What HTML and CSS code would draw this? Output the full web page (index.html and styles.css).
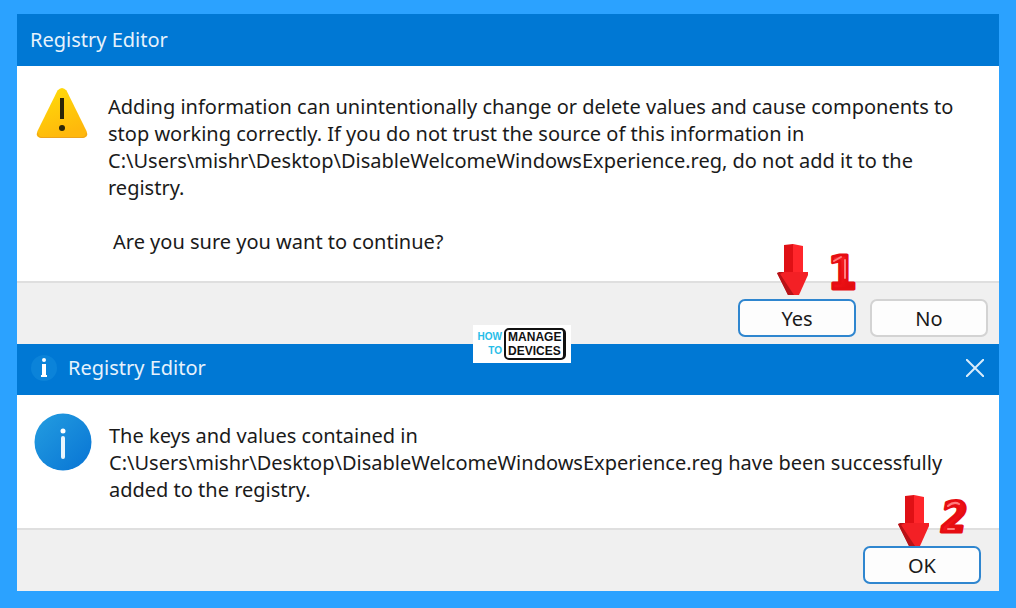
FILE: index.html
```html
<!DOCTYPE html>
<html lang="en">
<head>
  <meta charset="UTF-8">
  <title>Registry Editor</title>
  <meta name="viewport" content="width=device-width, initial-scale=1.0">
  <link rel="stylesheet" href="styles.css">
</head>
<body>

  <section class="dialog">
    <header class="title-bar">
      <h2>Registry Editor</h2>
    </header>
    <div class="message message-warning">
      <svg class="icon-warning" viewBox="0 0 52 52" aria-hidden="true">
        <defs>
          <linearGradient id="warn" x1="0" y1="0" x2="0.4" y2="1">
            <stop offset="0" stop-color="#ffde08"/>
            <stop offset="1" stop-color="#ffb80c"/>
          </linearGradient>
        </defs>
        <path d="M21.500 3.500Q26 -1.500 30.500 3.500L50.500 44Q53 50.500 47 51H5Q-1 50.500 1.500 44Z" fill="url(#warn)"/>
        <path d="M1.500 46Q2 50.500 6 50.500H46Q50 50.500 50.500 46" fill="none" stroke="#eda31c"/>
        <path d="M26 11V32" stroke="#2b2508" stroke-width="4"/>
        <circle cx="26" cy="41" r="3" fill="#2b2508"/>
      </svg>
      <div class="text">
        <p>Adding information can unintentionally change or delete values and cause components to stop working correctly. If you do not trust the source of this information in C:\Users\mishr\Desktop\DisableWelcomeWindowsExperience.reg, do not add it to the registry.</p>
        <p class="question">Are you sure you want to continue?</p>
      </div>
    </div>
    <footer class="actions">
      <div class="step">
        <button class="btn btn-default" type="button">Yes</button>
        <svg class="marker" viewBox="0 -6 90 70" aria-hidden="true">
          <defs>
            <linearGradient id="gloss" x1="0" y1="0" x2="1" y2="1">
              <stop offset="0" stop-color="#ff3a3a"/>
              <stop offset="0.5" stop-color="#f01116"/>
              <stop offset="1" stop-color="#d4080c"/>
            </linearGradient>
            <g id="arrow">
              <path d="M7 1L16 0V29H7Z" fill="#df1015"/>
              <path d="M16 0L26 2V29H16Z" fill="#ff262b"/>
              <path d="M0 29L2 28H14L20 51H11Z" fill="#b81217"/>
              <path d="M3 30L7 28H31V31L22 51H15Z" fill="#f32025"/>
              <path d="M0 29L3 30L17 51H11Z" fill="#b81217"/>
            </g>
          </defs>
          <use href="#arrow"/>
          <text class="digit digit-one" x="51" y="45">1</text>
          <path class="shine" d="M57 17L64 13M68 16V34"/>
        </svg>
      </div>
      <button class="btn" type="button">No</button>
    </footer>
  </section>

  <section class="dialog">
    <header class="title-bar title-bar-info">
      <svg class="icon-small" viewBox="0 0 28 28" aria-hidden="true">
        <circle cx="14" cy="14" r="13" fill="#0b83d9"/>
        <circle cx="14" cy="6" r="2" fill="#fff"/>
        <path d="M12 10H16V21H17V23H11V21H12Z" fill="#fff"/>
      </svg>
      <h2>Registry Editor</h2>
      <button class="close" type="button" aria-label="Close">
        <svg viewBox="0 0 18 18" aria-hidden="true">
          <path d="M0 0L18 18M18 0L0 18" stroke="#d9ecfb" stroke-width="2"/>
        </svg>
      </button>
    </header>
    <div class="message message-info">
      <svg class="icon-info" viewBox="0 0 58 58" aria-hidden="true">
        <defs>
          <linearGradient id="info" x1="0" y1="0" x2="1" y2="1">
            <stop offset="0.1" stop-color="#2199df"/>
            <stop offset="1" stop-color="#0874d4"/>
          </linearGradient>
        </defs>
        <circle cx="29" cy="29" r="28.500" fill="url(#info)"/>
        <circle cx="29" cy="18" r="2.500" fill="#fff"/>
        <path d="M29 25V44" stroke="#e9f5fd" stroke-width="4" stroke-linecap="round"/>
      </svg>
      <div class="text">
        <p>The keys and values contained in C:\Users\mishr\Desktop\DisableWelcomeWindowsExperience.reg have been successfully added to the registry.</p>
      </div>
    </div>
    <footer class="actions actions-last">
      <div class="step">
        <button class="btn btn-default" type="button">OK</button>
        <svg class="marker" viewBox="0 -6 90 70" aria-hidden="true">
          <use href="#arrow"/>
          <text class="digit" x="43" y="37">2</text>
          <path class="shine" d="M50 11Q56 6 61 9M50 34H56"/>
        </svg>
      </div>
    </footer>

    <div class="logo">
      <span class="logo-left">HOW<br>TO</span>
      <span class="logo-right">MANAGE<br>DEVICES</span>
    </div>
  </section>

</body>
</html>
```
FILE: styles.css
```css
* {
  box-sizing: border-box;
  margin: 0;
  padding: 0;
}

body {
  background: #2ba2ff;
  color: #1a1a1a;
  font-family: "Noto Sans", "Open Sans", sans-serif;
  font-size: 20px;
  line-height: 27px;
  padding: 14px 17px 18px;
}

.dialog {
  position: relative;
  background: #fff;
}

.title-bar {
  display: flex;
  align-items: center;
  height: 52px;
  padding: 0 15px 2px 13px;
  background: #0078d4;
  color: #e6f2fc;
}

.title-bar h2 {
  font-size: 20px;
  font-weight: normal;
}

.title-bar-info {
  gap: 10px;
  height: 51px;
  padding-bottom: 4px;
}

.icon-small {
  width: 28px;
  height: 28px;
}

.close {
  display: flex;
  margin-left: auto;
  background: none;
  border: none;
  cursor: pointer;
}

.close svg {
  width: 18px;
  height: 18px;
}

.message {
  display: flex;
  align-items: flex-start;
}

.message-warning {
  gap: 20px;
  padding: 21px 20px 26px 19px;
}

.message-info {
  gap: 17px;
  padding: 18px 17px 25px;
}

.text {
  flex: 1;
  overflow-wrap: anywhere;
}

.message-warning .text {
  padding-top: 6px;
}

.message-info .text {
  padding-top: 9px;
}

.question {
  margin-top: 27px;
  padding-left: 5px;
}

.icon-warning {
  width: 52px;
  height: 52px;
}

.icon-info {
  width: 58px;
  height: 58px;
}

.actions {
  display: flex;
  justify-content: flex-end;
  gap: 14px;
  padding: 16px 11px 7px;
  background: #f0f0f0;
  border-top: 2px solid #dfdfdf;
}

.actions-last {
  padding-right: 18px;
}

.step {
  position: relative;
}

.btn {
  display: block;
  width: 118px;
  height: 38px;
  background: #fdfdfd;
  border: 2px solid #d3d3d3;
  border-radius: 7px;
  color: #1a1a1a;
  font-family: inherit;
  font-size: 20px;
  cursor: pointer;
}

.btn-default {
  border-color: #2f86cf;
}

/* arrow and step number sit above the button */
.marker {
  position: absolute;
  left: 39px;
  bottom: 29px;
  width: 90px;
  height: 70px;
  pointer-events: none;
}

.actions-last .marker {
  left: 35px;
  bottom: 25px;
}

.digit {
  font-family: "DejaVu Sans Condensed", "DejaVu Sans", sans-serif;
  font-size: 42px;
  font-weight: bold;
  font-style: italic;
  fill: url(#gloss);
  stroke: #e60d12;
  stroke-width: 3;
  stroke-linejoin: round;
}

.digit-one {
  font-size: 46px;
  font-style: normal;
}

.shine {
  fill: none;
  stroke: #ff7d7d;
  stroke-width: 2;
  stroke-linecap: round;
}

.logo {
  position: absolute;
  top: -19px;
  left: 50%;
  display: flex;
  align-items: center;
  justify-content: center;
  gap: 2px;
  width: 98px;
  height: 38px;
  margin-left: -35px;
  background: #fff;
  color: #111;
  font-family: "Liberation Sans", sans-serif;
  font-size: 12px;
  font-weight: bold;
  line-height: 14px;
}

.logo-left {
  color: #27bde8;
  font-size: 10px;
  text-align: right;
}

.logo-right {
  padding: 0 2px;
  border: 2px solid #111;
  border-right-width: 3px;
  border-radius: 5px;
}
```
